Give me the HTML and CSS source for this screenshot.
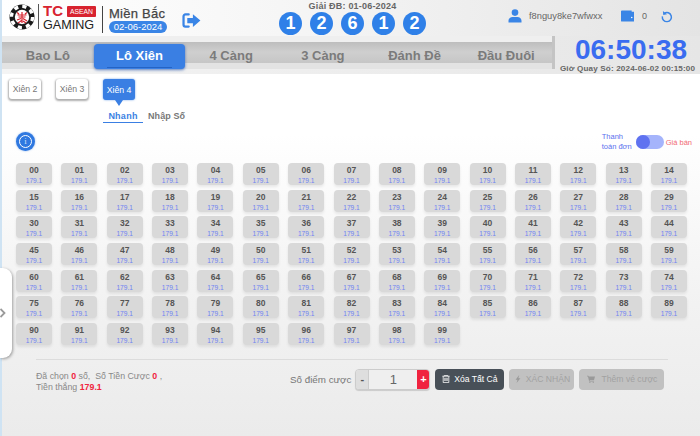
FILE: index.html
```html
<!DOCTYPE html>
<html lang="vi">
<head>
<meta charset="utf-8">
<title>Lô Xiên</title>
<link rel="stylesheet" href="styles.css">
</head>
<body>
<div class="app">
  <header class="header">
    <div class="brand">
      <svg class="logo" viewBox="0 0 26 26" aria-hidden="true">
        <circle cx="13" cy="13" r="12.5" fill="#1a1a1a"/>
        <circle cx="13" cy="13" r="10.6" fill="none" stroke="#fff" stroke-width="3.4" stroke-dasharray="4.2 4.12"/>
        <circle cx="13" cy="13" r="8.2" fill="#1a1a1a"/>
        <circle cx="13" cy="13" r="7.2" fill="#fff"/>
        <path d="M8 8.5l2 1.5M18 8.5l-2 1.5M8.5 11h9M9.5 13h7M13 8v11M8 16l4-1.5M14 14.5l4 2.5M9 19l3.5-2.5M17 19l-3-2" stroke="#d8232f" stroke-width="1.2" fill="none"/>
      </svg>
      <div class="brand-name">
        <div class="brand-top"><span class="tc">TC</span><span class="asean">ASEAN</span></div>
        <div class="gaming">GAMING</div>
      </div>
      <div class="region">
        <div class="region-name">Miền Bắc</div>
        <div class="region-date">02-06-2024</div>
      </div>
      <svg class="exit" viewBox="0 0 20 16" aria-hidden="true">
        <path d="M7 1.5H3.5A2 2 0 0 0 1.5 3.5v9a2 2 0 0 0 2 2H7" fill="none" stroke="#3a85e6" stroke-width="2.4" stroke-linecap="round"/>
        <path d="M5.5 5.2h6V1.2L19.5 8l-8 6.8v-4h-6z" fill="#3a85e6"/>
      </svg>
    </div>
    <div class="special">
      <div class="special-label">Giải ĐB: 01-06-2024</div>
      <div class="balls">
        <span class="ball">1</span><span class="ball">2</span><span class="ball">6</span><span class="ball">1</span><span class="ball">2</span>
      </div>
    </div>
    <div class="account">
      <svg class="user-icon" viewBox="0 0 14 14" aria-hidden="true">
        <circle cx="7" cy="3.6" r="3.3" fill="#3a85e6"/>
        <path d="M0.5 13.5v-1.7C0.5 9.5 2.5 8 4.5 8h5c2 0 4 1.5 4 3.8v1.7z" fill="#3a85e6"/>
      </svg>
      <span class="username">f8nguy8ke7wfwxx</span>
      <svg class="wallet-icon" viewBox="0 0 14 12" aria-hidden="true">
        <path d="M1 0h10.5v1.4H14V12H1a1 1 0 0 1-1-1V1a1 1 0 0 1 1-1z" fill="#3a85e6"/>
        <circle cx="11.6" cy="7.6" r=".8" fill="#fff"/>
      </svg>
      <span class="balance">0</span>
      <svg class="refresh-icon" viewBox="0 0 14 14" aria-hidden="true">
        <path d="M4 3.2a5.3 5.3 0 1 1-2.4 3.6" fill="none" stroke="#3a85e6" stroke-width="1.7"/>
        <path d="M2.2 0.6l.4 4.6 4.4-.8z" fill="#3a85e6"/>
      </svg>
    </div>
  </header>

  <div class="bar">
    <nav class="tabs">
      <a class="tab">Bao Lô</a>
      <a class="tab tab-active"><span class="tab-line">Lô Xiên</span></a>
      <a class="tab">4 Càng</a>
      <a class="tab">3 Càng</a>
      <a class="tab">Đánh Đề</a>
      <a class="tab">Đầu Đuôi</a>
    </nav>
    <div class="clock">
      <div class="clock-time">06:50:38</div>
      <div class="clock-next">Giờ Quay Số: 2024-06-02 00:15:00</div>
    </div>
  </div>

  <main class="panel">
    <div class="types">
      <button class="type">Xiên 2</button>
      <button class="type">Xiên 3</button>
      <button class="type type-active">Xiên 4</button>
    </div>
    <div class="modes">
      <span class="mode mode-active">Nhanh</span>
      <span class="mode">Nhập Số</span>
    </div>
    <div class="options">
      <span class="info"><span class="info-in">i</span></span>
      <div class="pay">
        <span class="pay-label">Thanh<br>toán đơn</span>
        <span class="switch"><span class="knob"></span></span>
        <span class="pay-price">Giá bán</span>
      </div>
    </div>
    <div class="grid" id="grid"></div>
    <div class="footer">
      <div class="summary">
        Đã chọn <b class="red">0</b> số,&nbsp; Số Tiền Cược <b class="red">0</b> ,<br>
        Tiền thắng <b class="red">179.1</b>
      </div>
      <div class="stake">
        <span class="stake-label">Số điểm cược</span>
        <div class="stepper">
          <span class="minus">-</span>
          <span class="amount">1</span>
          <span class="plus">+</span>
        </div>
      </div>
      <button class="btn btn-dark">
        <svg class="btn-icon" viewBox="0 0 10 10" aria-hidden="true"><path d="M0.5 1.5h9M1.5 1.5v8h7v-8M3.5 3.5v4M5 3.5v4M6.5 3.5v4M3 1.5v-1h4v1" fill="none" stroke="#fff" stroke-width="1"/></svg>
        Xóa Tất Cả
      </button>
      <button class="btn btn-off">
        <svg class="btn-icon" viewBox="0 0 10 10" aria-hidden="true"><path d="M6.5 0L2 5.8h2.4L3.2 10l4.8-6H5.5z" fill="#999"/></svg>
        XÁC NHẬN
      </button>
      <button class="btn btn-off btn-wide">
        <svg class="btn-icon" viewBox="0 0 10 10" aria-hidden="true"><path d="M0 .8h1.8l.4 1.2H10L8.8 6.2H3.2l.3 1h5.3v1H2.7L1.2 1.8H0z" fill="#999"/><circle cx="3.6" cy="9.2" r=".8" fill="#999"/><circle cx="7.8" cy="9.2" r=".8" fill="#999"/></svg>
        Thêm vé cược
      </button>
    </div>
  </main>

  <div class="handle">
    <svg class="handle-icon" viewBox="0 0 6 10" aria-hidden="true"><path d="M0.5 1l4 4-4 4" fill="none" stroke="#9a9a9a" stroke-width="1.8"/></svg>
  </div>
</div>
<script src="app.js"></script>
</body>
</html>
```

FILE: app.js
```js
var grid = document.getElementById('grid');
for (var i = 0; i < 100; i++) {
  var cell = document.createElement('div');
  cell.className = 'cell';
  var num = document.createElement('span');
  num.className = 'cell-num';
  num.textContent = (i < 10 ? '0' : '') + i;
  var odd = document.createElement('span');
  odd.className = 'cell-odd';
  odd.textContent = '179.1';
  cell.appendChild(num);
  cell.appendChild(odd);
  grid.appendChild(cell);
}
```

FILE: styles.css
```css
* { box-sizing: border-box; }
html, body { margin: 0; padding: 0; }
body { width: 700px; height: 436px; overflow: hidden; background: #cfe3f3; font-family: "Liberation Sans", Arial, sans-serif; }

.app { position: relative; width: 698px; height: 436px; margin-left: 2px; display: flex; flex-direction: column; background: #fff; }

.header { height: 36px; flex: none; display: grid; grid-template-columns: 267px 167px 1fr; background: linear-gradient(90deg, #fff 0%, #f6f6f6 40%, #e4e4e4 100%); }
.brand { display: flex; align-items: flex-start; padding: 4px 0 0 7px; }
.logo { width: 26px; height: 26px; flex: none; }
.brand-name { margin-left: 3px; padding-left: 4px; border-left: 1px solid #555; height: 25px; width: 58px; flex: none; }
.brand-top { display: flex; align-items: center; gap: 4px; height: 12px; margin-top: 1px; }
.tc { font-size: 15px; font-weight: 700; color: #d8232f; line-height: 12px; }
.asean { background: #d8232f; color: #fff; font-size: 6.8px; line-height: 11px; width: 29px; text-align: center; border-radius: 1px; }
.gaming { font-size: 12.6px; line-height: 12px; color: #222; margin-top: 2px; }
.region { margin-left: 6px; padding-left: 6px; border-left: 1px solid #444; height: 27px; width: 66px; flex: none; margin-top: 2px; }
.region-name { font-size: 13px; color: #444; line-height: 13px; letter-spacing: .25px; -webkit-text-stroke: .25px #444; white-space: nowrap; margin-top: 1px; }
.region-date { width: 58px; height: 12px; margin-top: 1px; background: #3a85e6; border-radius: 6px; color: #fff; font-size: 9.5px; line-height: 12px; text-align: center; }
.exit { width: 19px; height: 15px; margin: 9px 0 0 14px; flex: none; }

.special { display: flex; flex-direction: column; align-items: center; padding-top: 1px; }
.special-label { font-size: 9px; font-weight: 700; color: #666; line-height: 10px; letter-spacing: .2px; white-space: nowrap; }
.balls { display: flex; gap: 8px; margin-top: 1px; }
.ball { width: 23px; height: 23px; border-radius: 50%; background: #2f80e8; color: #fff; font-size: 18px; font-weight: 700; line-height: 23px; text-align: center; }

.account { display: flex; align-items: center; padding: 0 0 4px 72px; }
.user-icon { width: 14px; height: 14px; flex: none; }
.username { margin-left: 7px; font-size: 9.3px; color: #666; width: 92px; flex: none; }
.wallet-icon { width: 13px; height: 12px; flex: none; }
.balance { margin-left: 8px; font-size: 9px; color: #666; width: 11px; }
.refresh-icon { width: 12px; height: 13px; margin-left: 8px; flex: none; }

.bar { height: 38px; flex: none; display: flex; background: linear-gradient(90deg, #f4f4f4, #e6e6e6); }
.tabs { width: 553px; height: 33px; padding: 6px 0 5px; display: flex; background: linear-gradient(#efefef 0 6px, #bdbdbd 6px, #cfcfcf 16px, #c6c6c6 27px, #e3e3e3 27px, #e3e3e3 33px); border-right: 3px solid #c4c4c4; flex: none; }
.tab { flex: 1; display: flex; align-items: center; justify-content: center; font-size: 13px; font-weight: 700; color: #7b7b7b; white-space: nowrap; height: 27px; }
.tab-active { background: #3a7fe3; color: #fff; border-radius: 4px; box-shadow: 0 1px 3px rgba(30, 80, 170, .7); height: 25px; margin-top: 2px; }
.tab-line { display: block; padding: 0 0 3px; border-bottom: 1px solid #2563c4; width: 65px; text-align: center; line-height: 16px; margin-top: 3px; }

.clock { flex: 1; display: flex; flex-direction: column; align-items: center; }
.clock-time { font-size: 28px; font-weight: 700; color: #3a6cf0; line-height: 27px; margin-left: 7px; }
.clock-next { font-size: 8.1px; font-weight: 700; color: #666; line-height: 9px; white-space: nowrap; margin-top: 1px; letter-spacing: .15px; }

.panel { flex: 1; min-height: 0; padding: 5px 0 0 14px; background: linear-gradient(#fff 0, #fff 60px, #f2f2f2 230px, #ebebeb 362px); border-radius: 5px 0 0 0; }
.types { display: flex; height: 22px; margin-left: -7px; }
.type { width: 32px; height: 20px; padding: 0; border: 0; border-radius: 3px; background: #fff; box-shadow: 0 1px 2px 1px rgba(0, 0, 0, .32); color: #777; font: 8.7px "Liberation Sans", Arial, sans-serif; margin-right: 15px; }
.type-active { position: relative; background: #3a7fe3; color: #fff; box-shadow: 0 0 2px rgba(58, 127, 227, .8); height: 21px; }
.type-active::after { content: ""; position: absolute; left: 12px; top: 21px; border: 4px solid transparent; border-top: 6px solid #3a7fe3; border-bottom: 0; }

.modes { display: flex; margin: 9px 0 0 87px; height: 15px; gap: 5px; }
.mode { font-size: 9px; font-weight: 700; color: #777; line-height: 12px; letter-spacing: .1px; }
.mode-active { color: #3a7fe3; width: 40px; text-align: center; height: 13px; border-bottom: 1px solid #3a7fe3; letter-spacing: .25px; }

.options { display: flex; align-items: flex-start; justify-content: space-between; height: 31px; padding-right: 8px; margin-top: 7px; }
.info { width: 19px; height: 19px; border-radius: 50%; background: #2f78e0; display: flex; align-items: center; justify-content: center; box-shadow: 0 0 2px rgba(47, 120, 224, .6); }
.info-in { width: 13px; height: 13px; border-radius: 50%; border: 1px solid #fff; color: #cfe1fb; font-size: 9px; line-height: 11px; text-align: center; font-family: "Liberation Serif", serif; }
.pay { display: flex; align-items: center; }
.pay-label { font-size: 7.5px; line-height: 10px; color: #5a70ee; width: 34px; }
.switch { width: 28px; height: 14px; border-radius: 7px; background: #a5b4fb; position: relative; }
.knob { position: absolute; left: 0; top: 0; width: 14px; height: 14px; border-radius: 50%; background: #5f72f0; }
.pay-price { margin-left: 2px; font-size: 7.5px; color: #f16a75; }

.grid { display: grid; grid-template-columns: repeat(15, 36px); column-gap: 9.36px; row-gap: 4.67px; width: 671px; }
.cell { height: 22px; border-radius: 4px; background: #d9d9d9; box-shadow: 0 2px 3px rgba(0, 0, 0, .08); display: flex; flex-direction: column; align-items: center; padding-top: 2px; }
.cell-num { font-size: 8.5px; font-weight: 700; color: #555; line-height: 10px; }
.cell-odd { font-size: 6.6px; color: #6f83f2; line-height: 9px; margin-top: 1px; }

.footer { margin: 14px 0 0 20px; width: 632px; border-top: 1px solid #dcdcdc; display: flex; align-items: flex-start; padding-top: 9px; }
.summary { width: 254px; font-size: 8.8px; line-height: 11px; color: #888; padding-top: 2px; flex: none; }
.red { color: #f0263f; font-weight: 700; }
.stake { display: flex; align-items: center; height: 21px; }
.stake-label { font-size: 9.8px; color: #777; white-space: nowrap; }
.stepper { display: flex; margin-left: 4px; width: 75px; height: 21px; border: 1px solid #ccc; border-radius: 4px; background: #efefef; overflow: hidden; box-shadow: 0 1px 1px rgba(0, 0, 0, .15); }
.minus { width: 13px; flex: none; background: #dedede; color: #555; font-size: 11px; font-weight: 700; line-height: 18px; text-align: center; border-right: 1px solid #ccc; }
.amount { flex: 1; text-align: center; font-size: 13px; color: #666; line-height: 19px; }
.plus { width: 12px; flex: none; background: #f0233f; color: #fff; font-size: 11px; font-weight: 700; line-height: 18px; text-align: center; }
.btn { height: 21px; border: 0; border-radius: 4px; display: flex; align-items: center; justify-content: center; gap: 4px; padding: 0; font: 8.6px "Liberation Sans", Arial, sans-serif; white-space: nowrap; }
.btn-dark { width: 69px; margin-left: 5px; background: #485058; color: #fff; }
.btn-off { width: 65px; margin-left: 5px; background: #c1c1c1; color: #a2a2a2; }
.btn-wide { width: 85px; gap: 7px; }
.btn-icon { width: 8px; height: 8px; flex: none; }

.handle { position: absolute; left: -2px; top: 268px; width: 12px; height: 90px; background: #fff; border-radius: 0 9px 9px 0; box-shadow: 1px 1px 3px rgba(0, 0, 0, .35); display: flex; align-items: center; }
.handle-icon { width: 6px; height: 10px; }
```
